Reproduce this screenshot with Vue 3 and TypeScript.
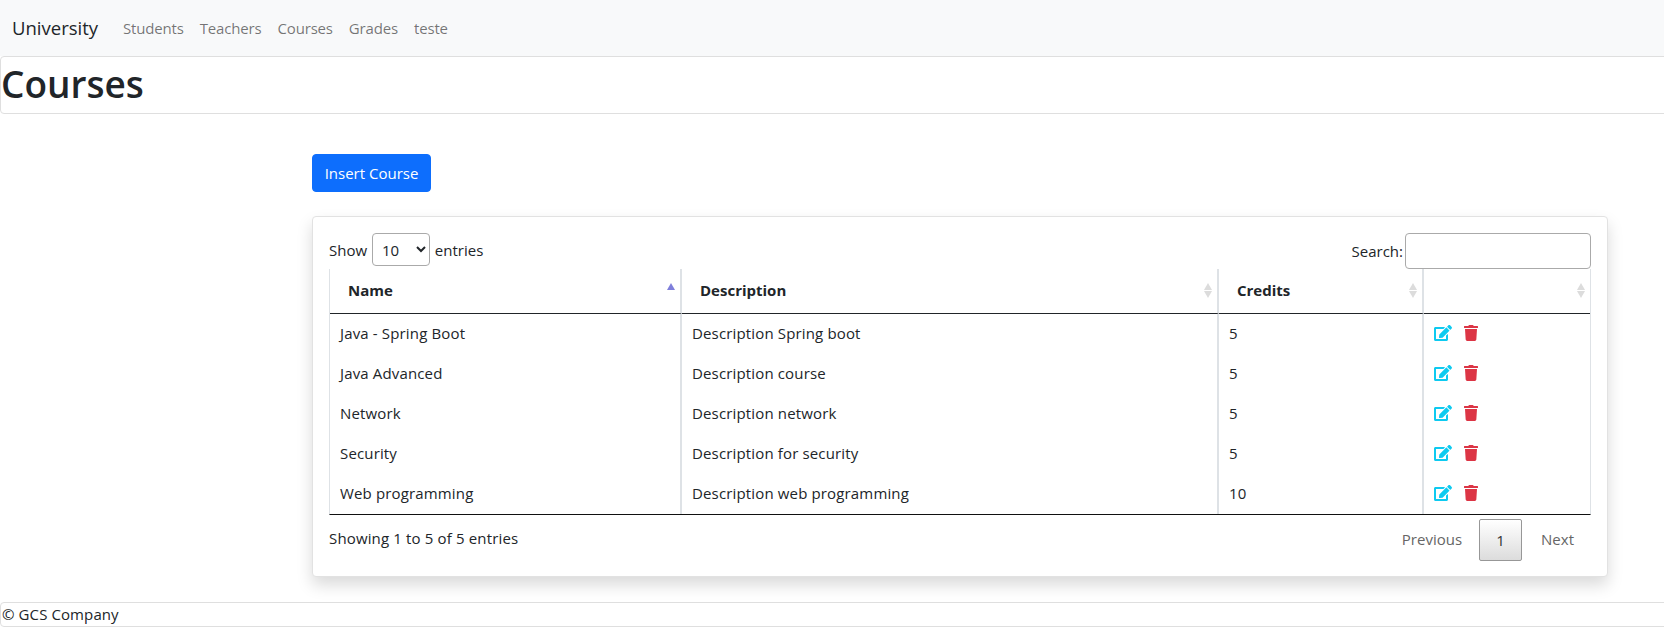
<script setup lang="ts">
interface Course {
  name: string;
  description: string;
  credits: number;
}

const links = ['Students', 'Teachers', 'Courses', 'Grades', 'teste']

const courses: Course[] = [
  { name: 'Java - Spring Boot', description: 'Description Spring boot', credits: 5 },
  { name: 'Java Advanced', description: 'Description course', credits: 5 },
  { name: 'Network', description: 'Description network', credits: 5 },
  { name: 'Security', description: 'Description for security', credits: 5 },
  { name: 'Web programming', description: 'Description web programming', credits: 10 }
]
</script>

<template>
  <div class="page">
    <nav class="navbar">
      <a class="brand" href="#">University</a>
      <a v-for="link in links" :key="link" class="nav-link" href="#">{{ link }}</a>
    </nav>

    <header class="title-card">
      <h1>Courses</h1>
    </header>

    <main class="content">
      <button class="btn-insert" type="button">Insert Course</button>

      <section class="table-card">
        <div class="controls">
          <label class="length">
            Show
            <select>
              <option>10</option>
              <option>25</option>
              <option>50</option>
            </select>
            entries
          </label>
          <label class="search">Search:<input type="search"></label>
        </div>

        <table>
          <thead>
            <tr>
              <th class="col-name">Name<span class="sort asc"></span></th>
              <th class="col-desc">Description<span class="sort"></span></th>
              <th class="col-credits">Credits<span class="sort"></span></th>
              <th class="col-actions"><span class="sort"></span></th>
            </tr>
          </thead>
          <tbody>
            <tr v-for="course in courses" :key="course.name">
              <td>{{ course.name }}</td>
              <td>{{ course.description }}</td>
              <td>{{ course.credits }}</td>
              <td class="actions">
                <svg class="icon-edit" viewBox="0 0 576 512" aria-hidden="true">
                  <path d="M402.6 83.2l90.2 90.2c3.8 3.8 3.8 10 0 13.8L274.4 405.6l-92.8 10.3c-12.4 1.4-22.9-9.1-21.5-21.5l10.3-92.8L388.8 83.2c3.8-3.8 10-3.8 13.8 0zm162-22.9l-48.8-48.8c-15.2-15.2-39.9-15.2-55.2 0l-35.4 35.4c-3.8 3.8-3.8 10 0 13.8l90.2 90.2c3.8 3.8 10 3.8 13.8 0l35.4-35.4c15.2-15.3 15.2-40 0-55.2zM384 346.2V448H64V128h229.8c3.2 0 6.2-1.3 8.5-3.5l40-40c7.6-7.6 2.2-20.5-8.5-20.5H48C21.5 64 0 85.5 0 112v352c0 26.5 21.5 48 48 48h352c26.5 0 48-21.5 48-48V306.2c0-10.7-12.9-16-20.5-8.5l-40 40c-2.2 2.3-3.5 5.3-3.5 8.5z" />
                </svg>
                <svg class="icon-trash" viewBox="0 0 448 512" aria-hidden="true">
                  <path d="M432 32H312l-9.4-18.7A24 24 0 0 0 281.1 0H166.8a23.72 23.72 0 0 0-21.4 13.3L136 32H16A16 16 0 0 0 0 48v32a16 16 0 0 0 16 16h416a16 16 0 0 0 16-16V48a16 16 0 0 0-16-16zM53.2 467a48 48 0 0 0 47.9 45h245.8a48 48 0 0 0 47.9-45L416 128H32z" />
                </svg>
              </td>
            </tr>
          </tbody>
        </table>

        <div class="table-footer">
          <div class="info">Showing 1 to 5 of 5 entries</div>
          <div class="pagination">
            <a href="#">Previous</a>
            <a class="current" href="#">1</a>
            <a href="#">Next</a>
          </div>
        </div>
      </section>
    </main>

    <footer class="site-footer">© GCS Company</footer>
  </div>
</template>

<style>
html,
body {
  margin: 0;
  background: #fff;
}
</style>

<style scoped>
.page {
  overflow: hidden;
  font-family: "Open Sans", "Noto Sans", sans-serif;
  font-size: 15px;
  line-height: 24px;
  color: #212529;
}
a {
  text-decoration: none;
}
.navbar {
  display: flex;
  align-items: center;
  height: 56px;
  padding-left: 12px;
  background: #f8f9fa;
  box-sizing: border-box;
}
.brand {
  font-size: 18.5px;
  color: #212529;
  margin-right: 17px;
}
.nav-link {
  padding: 0 8px;
  color: rgba(0, 0, 0, 0.55);
  letter-spacing: -0.17px;
}
.title-card {
  height: 58px;
  margin-right: -12px;
  border: 1px solid #dfdfdf;
  border-radius: 4px;
  box-sizing: border-box;
}
.title-card h1 {
  margin: 0;
  font-size: 37px;
  line-height: 54px;
  font-weight: 600;
}
.content {
  margin: 40px 56px 0 312px;
}
.btn-insert {
  display: block;
  width: 119px;
  height: 38px;
  padding: 0;
  border: 1px solid #0d6efd;
  border-radius: 4px;
  background: #0d6efd;
  color: #fff;
  font: inherit;
}
.table-card {
  margin-top: 24px;
  height: 361px;
  padding: 16px;
  background: #fff;
  border: 1px solid #e2e2e2;
  border-radius: 4px;
  box-sizing: border-box;
  box-shadow: 0 8px 16px rgba(0, 0, 0, 0.15);
}
.controls {
  display: flex;
  justify-content: space-between;
  align-items: flex-start;
  height: 36px;
}
.length {
  line-height: 32px;
}
.length select {
  width: 58px;
  height: 33px;
  margin: 0 1px;
  padding: 0 0 0 5px;
  border: 1px solid #aaa;
  border-radius: 4px;
  background: #fff;
  color: #212529;
  font: inherit;
}
.search {
  display: flex;
  align-items: center;
}
.search input {
  width: 186px;
  height: 36px;
  margin-left: 2px;
  padding: 0;
  border: 1px solid #aaa;
  border-radius: 4px;
  background: #fff;
  box-sizing: border-box;
}
table {
  width: 1262px;
  table-layout: fixed;
  border-collapse: separate;
  border-spacing: 0;
  border-left: 1px solid #dee2e6;
  border-right: 1px solid #dee2e6;
  border-bottom: 1px solid #111;
  box-sizing: border-box;
}
th {
  position: relative;
  height: 45px;
  padding: 0 18px 2px;
  box-sizing: border-box;
  text-align: left;
  font-weight: 700;
  border-bottom: 1px solid #212529;
  border-right: 2px solid #dee2e6;
}
.col-name {
  width: 352px;
}
.col-desc {
  width: 537px;
}
.col-credits {
  width: 205px;
}
th:last-child,
td:last-child {
  border-right: none;
}
td {
  height: 40px;
  padding: 0 10px 2px;
  box-sizing: border-box;
  border-right: 2px solid #dee2e6;
  letter-spacing: 0.15px;
}
.actions svg {
  display: inline-block;
  height: 16px;
  vertical-align: -2px;
}
.icon-edit {
  width: 18px;
  fill: #0dcaf0;
}
.icon-trash {
  width: 14px;
  margin-left: 12px;
  fill: #dc3545;
}
.sort {
  position: absolute;
  right: 4px;
  top: 14px;
  width: 9px;
  height: 15px;
}
.sort::before,
.sort::after {
  content: "";
  position: absolute;
  left: 0;
  border-left: 4.5px solid transparent;
  border-right: 4.5px solid transparent;
}
.sort::before {
  top: 0;
  border-bottom: 7px solid #dcdcdc;
}
.sort::after {
  bottom: 0;
  border-top: 7px solid #dcdcdc;
}
.sort.asc::before {
  border-bottom-color: #7f7fdb;
}
.sort.asc::after {
  display: none;
}
.table-footer {
  display: flex;
  justify-content: space-between;
  align-items: flex-start;
}
.info {
  padding-top: 11px;
  letter-spacing: 0.15px;
}
.pagination {
  display: flex;
  margin-top: 4px;
  margin-right: 1px;
}
.pagination a {
  height: 42px;
  padding: 0 16px;
  line-height: 40px;
  color: #666;
  box-sizing: border-box;
}
.pagination .current {
  width: 43px;
  padding: 0;
  margin: 0 3px 0 1px;
  text-align: center;
  line-height: 40px;
  color: #333;
  border: 1px solid #979797;
  border-radius: 2px;
  background: linear-gradient(to bottom, #fff 0%, #dcdcdc 100%);
}
.site-footer {
  height: 25px;
  margin-top: 25px;
  margin-right: -12px;
  padding-left: 1px;
  line-height: 23px;
  letter-spacing: 0.1px;
  border: 1px solid #dfdfdf;
  border-radius: 4px;
  box-sizing: border-box;
}
</style>
